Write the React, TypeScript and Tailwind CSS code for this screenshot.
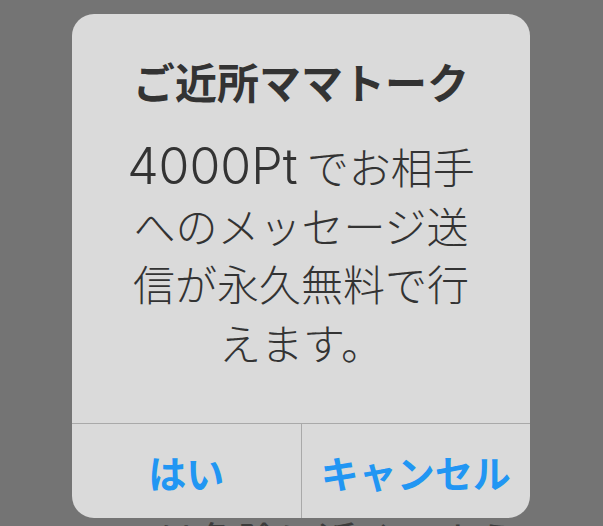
export default function App() {
  return (
    <div
      className="relative h-[526px] w-[603px] overflow-hidden bg-[#747474]"
      style={{ fontFamily: '"Noto Sans CJK JP", "Noto Sans", sans-serif' }}
    >
      {/* page content behind the overlay */}
      <div className="pt-[514px] pl-[158px] text-[40px] leading-[50px] text-[#3c3c3c] whitespace-nowrap">
        は危険に近くのよう
      </div>

      <div className="absolute left-[72px] top-[14px] flex h-[504px] w-[458px] flex-col rounded-[22px] bg-[#dadada]">
        <div className="flex flex-1 flex-col items-center pt-[42px]">
          <h1 className="text-[42px] font-bold leading-[50px] text-[#333333]">ご近所ママトーク</h1>
          <p className="mt-[31px] text-center text-[42px] font-light leading-[58.5px] text-[#333333]">
            <span className="font-['Inter',sans-serif] text-[50px] font-light leading-[58.5px]">4000Pt</span> でお相手
            <br />
            へのメッセージ送
            <br />
            信が永久無料で行
            <br />
            えます。
          </p>
        </div>
        <div className="flex h-[95px] border-t border-[#a9a9a9]">
          <button className="flex flex-1 items-center justify-center border-r border-[#a9a9a9] text-[38px] font-bold text-[#2196f3]">
            はい
          </button>
          <button className="flex flex-1 items-center justify-center text-[38px] font-bold text-[#2196f3]">
            キャンセル
          </button>
        </div>
      </div>
    </div>
  )
}
